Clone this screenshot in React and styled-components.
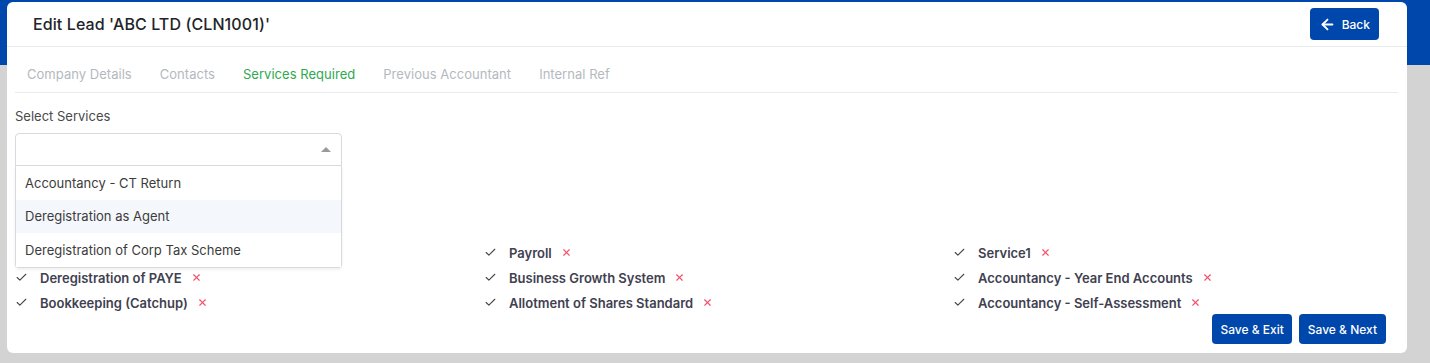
import React from 'react';
import styled, { createGlobalStyle } from 'styled-components';
import { Check, X, ArrowLeft } from 'lucide-react';

const GlobalStyle = createGlobalStyle`
  body {
    margin: 0;
    font-family: Inter, "Noto Sans", sans-serif;
    background: #d3d3d3;
  }
`;

const Page = styled.div`
  height: 363px;
  padding: 2px 23px 0 7px;
  box-sizing: border-box;
  background: linear-gradient(#0047ab 0 65px, #d3d3d3 65px);
`;

const Card = styled.div`
  background: #fff;
  border-radius: 6px;
  height: 351px;
  display: flex;
  flex-direction: column;
`;

const Header = styled.div`
  height: 44px;
  display: flex;
  align-items: center;
  justify-content: space-between;
  padding: 0 28px 0 26px;
  border-bottom: 1px solid #e9ecef;
`;

const Title = styled.h1`
  margin: 0;
  font-size: 16px;
  font-weight: 500;
  letter-spacing: 0.1px;
  color: #212529;
`;

const Button = styled.button`
  display: flex;
  align-items: center;
  gap: 6px;
  height: ${p => p.$h || 30}px;
  padding: 0 ${p => p.$px || 10}px;
  background: #0047ab;
  color: #fff;
  border: none;
  border-radius: 4px;
  font-family: inherit;
  font-size: 12px;
  font-weight: 500;
`;

const Body = styled.div`
  padding: 0 9px 0 8px;
  display: flex;
  flex-direction: column;
`;

const Tabs = styled.div`
  display: flex;
  gap: 28px;
  height: 46px;
  box-sizing: border-box;
  padding: 9px 0 0 12px;
  align-items: center;
  border-bottom: 1px solid #e9ecef;
`;

const Tab = styled.span`
  font-size: 13px;
  letter-spacing: 0.03px;
  color: ${p => (p.$active ? '#2fa84f' : '#b4b9c0')};
`;

const Label = styled.div`
  margin-top: 15px;
  font-size: 13px;
  color: #4a4a4a;
`;

const SelectWrap = styled.div`
  position: relative;
  width: 327px;
  margin-top: 9px;
`;

const SelectBox = styled.div`
  height: 33px;
  box-sizing: border-box;
  border: 1px solid #d6d9dd;
  border-radius: 4px 4px 0 0;
  display: flex;
  align-items: center;
  justify-content: flex-end;
  padding-right: 10px;
`;

const Caret = styled.span`
  width: 0;
  height: 0;
  border-left: 5px solid transparent;
  border-right: 5px solid transparent;
  border-bottom: 5px solid #9a9a9a;
`;

const Menu = styled.div`
  position: absolute;
  top: 33px;
  left: 0;
  right: 0;
  background: #fff;
  border: 1px solid #d6d9dd;
  border-top: none;
  border-radius: 0 0 4px 4px;
  box-shadow: 0 2px 3px rgba(0, 0, 0, 0.06);
  z-index: 2;
`;

const Option = styled.div`
  height: 33.5px;
  display: flex;
  align-items: center;
  padding-left: 9px;
  font-size: 13px;
  color: #3c3c3c;
  background: ${p => (p.$hover ? '#f4f7fb' : '#fff')};
`;

const Grid = styled.div`
  display: grid;
  grid-template-columns: repeat(3, 469px);
  grid-auto-rows: 25px;
  margin-top: 74px;
`;

const Item = styled.div`
  display: flex;
  align-items: center;
  font-size: 13px;
  font-weight: 600;
  color: #3f4150;
  svg.check {
    color: #44464f;
    margin-right: 12px;
  }
  svg.remove {
    color: #f4516c;
    margin-left: 9px;
  }
`;

const Footer = styled.div`
  display: flex;
  justify-content: flex-end;
  gap: 7px;
  padding-right: 12px;
  margin-top: -1px;
`;

const options = ['Accountancy - CT Return', 'Deregistration as Agent', 'Deregistration of Corp Tax Scheme'];

// first cell sits under the open dropdown menu, so it is left blank
const services = [
  null,
  'Payroll',
  'Service1',
  'Deregistration of PAYE',
  'Business Growth System',
  'Accountancy - Year End Accounts',
  'Bookkeeping (Catchup)',
  'Allotment of Shares Standard',
  'Accountancy - Self-Assessment',
];

export default function App() {
  return (
    <Page>
      <GlobalStyle />
      <Card>
        <Header>
          <Title>Edit Lead 'ABC LTD (CLN1001)'</Title>
          <Button $h={32} $px={9}>
            <ArrowLeft size={17} strokeWidth={2.6} />
            Back
          </Button>
        </Header>
        <Body>
          <Tabs>
            <Tab>Company Details</Tab>
            <Tab>Contacts</Tab>
            <Tab $active>Services Required</Tab>
            <Tab>Previous Accountant</Tab>
            <Tab>Internal Ref</Tab>
          </Tabs>
          <Label>Select Services</Label>
          <SelectWrap>
            <SelectBox>
              <Caret />
            </SelectBox>
            <Menu>
              {options.map((o, i) => (
                <Option key={o} $hover={i === 1}>{o}</Option>
              ))}
            </Menu>
          </SelectWrap>
          <Grid>
            {services.map((s, i) =>
              s ? (
                <Item key={s}>
                  <Check className="check" size={13} strokeWidth={2} />
                  {s}
                  <X className="remove" size={11} strokeWidth={2.5} />
                </Item>
              ) : (
                <div key={i} />
              )
            )}
          </Grid>
          <Footer>
            <Button $px={8}>Save &amp; Exit</Button>
            <Button $px={9}>Save &amp; Next</Button>
          </Footer>
        </Body>
      </Card>
    </Page>
  );
}
